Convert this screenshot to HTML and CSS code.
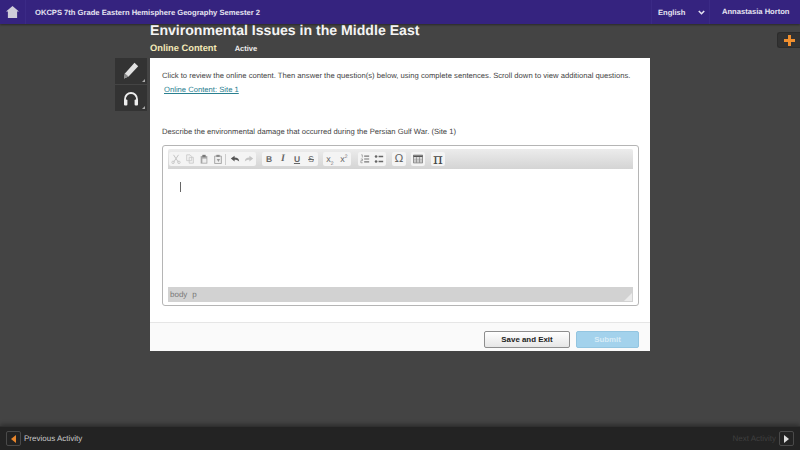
FILE: index.html
```html
<!doctype html>
<html>
<head>
  <title>Environmental Issues in the Middle East</title>
  <link rel="stylesheet" href="styles.css">
</head>
<body>
  <header class="topbar">
    <a class="home">
      <svg width="13" height="12" viewBox="0 0 14 13"><path d="M7 0L14 6H12V13H2V6H0Z" fill="#cfcdda"/></svg>
    </a>
    <div class="course">OKCPS 7th Grade Eastern Hemisphere Geography Semester 2</div>
    <div class="lang">
      <span>English</span>
      <svg width="7" height="5" viewBox="0 0 7 5"><path d="M.8 1L3.5 3.7L6.2 1" fill="none" stroke="#e4e2f0" stroke-width="1.6"/></svg>
    </div>
    <div class="user">Annastasia Horton</div>
  </header>

  <main class="stage">
    <button class="plus">
      <svg width="11" height="11" viewBox="0 0 11 11"><path d="M4 0H7V4H11V7H7V11H4V7H0V4H4Z" fill="#f08f2e"/></svg>
    </button>
    <div class="column">
      <h1>Environmental Issues in the Middle East</h1>
      <div class="subtitle">
        <span class="kind">Online Content</span>
        <span class="status">Active</span>
      </div>
      <div class="workspace">
        <div class="tools">
          <div class="tool">
            <svg width="16" height="18" viewBox="0 0 16 18"><path d="M11.5 .8L15.2 4.2L5.6 14.6L1 16.6L1.9 11.6Z" fill="#e2e2e2"/><path d="M1.9 11.6L5.6 14.6L1 16.6Z" fill="#8a8a8a"/></svg>
          </div>
          <div class="tool">
            <svg width="16" height="15" viewBox="0 0 16 15"><path d="M2 11V8A6 6 0 0 1 14 8V11" fill="none" stroke="#eee" stroke-width="1.8"/><rect x="1" y="8.5" width="3.4" height="6" rx="1" fill="#eee"/><rect x="11.6" y="8.5" width="3.4" height="6" rx="1" fill="#eee"/></svg>
          </div>
        </div>
        <section class="card">
          <div class="card-body">
            <p class="intro">Click to review the online content. Then answer the question(s) below, using complete sentences. Scroll down to view additional questions.</p>
            <a class="site-link">Online Content: Site 1</a>
            <p class="question">Describe the environmental damage that occurred during the Persian Gulf War. (Site 1)</p>
            <div class="editor">
              <div class="toolbar">
                <div class="group">
                  <svg class="ico" viewBox="0 0 12 12"><path d="M3 1L9 10M9 1L3 10" stroke="#c4c4c4" stroke-width="1.2" fill="none"/><circle cx="2.5" cy="10" r="1.5" fill="none" stroke="#c4c4c4"/><circle cx="9.5" cy="10" r="1.5" fill="none" stroke="#c4c4c4"/></svg>
                  <svg class="ico" viewBox="0 0 12 12"><path d="M2 1H6L8 3V8H2ZM5 4H10V11H5Z" fill="#f2f2f2" stroke="#c8c8c8"/></svg>
                  <svg class="ico" viewBox="0 0 12 12"><path d="M2 2.5H10V11.5H2Z" fill="#a6a6a6"/><path d="M4 1H8V3.5H4Z" fill="#777"/><path d="M4 5.5H9V10.5H4Z" fill="#eee"/></svg>
                  <svg class="ico" viewBox="0 0 12 12"><path d="M2 2.5H10V11.5H2Z" fill="#eee" stroke="#999"/><path d="M4 1H8V3.5H4Z" fill="#888"/><path d="M4.5 6H8.5L6.5 9.5Z" fill="#999"/></svg>
                  <span class="sep"></span>
                  <svg class="ico" viewBox="0 0 12 12"><path d="M1 5.5L5.5 2V4.2C9 4.2 11 6 11 9C9.8 7.4 8 6.8 5.5 6.8V9Z" fill="#555"/></svg>
                  <svg class="ico" viewBox="0 0 12 12"><path d="M11 5.5L6.5 2V4.2C3 4.2 1 6 1 9C2.2 7.4 4 6.8 6.5 6.8V9Z" fill="#c4c4c4"/></svg>
                </div>
                <div class="group">
                  <span class="glyph bold">B</span>
                  <span class="glyph ital">I</span>
                  <span class="glyph under">U</span>
                  <span class="glyph strike">S</span>
                </div>
                <div class="group pull">
                  <span class="glyph script">x<sub>2</sub></span>
                  <span class="glyph script">x<sup>2</sup></span>
                </div>
                <div class="group push">
                  <svg class="ico" viewBox="0 0 12 12"><path d="M5 2.5H11M5 6H11M5 9.5H11" stroke="#777" stroke-width="1.4"/><path d="M1.5 1H2.8V4.2M1 6H3V8H1V10.5H3.2" fill="none" stroke="#888" stroke-width=".8"/></svg>
                  <svg class="ico" viewBox="0 0 12 12"><path d="M5.5 3H11M5.5 9H11" stroke="#666" stroke-width="2"/><circle cx="2.5" cy="3" r="1.6" fill="#666"/><circle cx="2.5" cy="9" r="1.6" fill="#666"/></svg>
                </div>
                <div class="group">
                  <span class="glyph omega">Ω</span>
                </div>
                <div class="group pull">
                  <svg class="ico" viewBox="0 0 13 12"><path d="M.5 1H12.5V11H.5Z" fill="#f4f4f4" stroke="#666"/><path d="M.5 1.5H12.5V3.6H.5Z" fill="#555"/><path d="M.5 6.2H12.5M.5 8.6H12.5M4.5 3.6V11M8.5 3.6V11" stroke="#888"/></svg>
                </div>
                <div class="group">
                  <span class="glyph pi">π</span>
                </div>
              </div>
              <div class="edit-area"><span class="caret"></span></div>
              <div class="statusbar">
                <span>body</span><span>p</span>
                <svg class="grip" width="8" height="8" viewBox="0 0 8 8"><path d="M8 0V8H0Z" fill="#ebebeb"/></svg>
              </div>
            </div>
          </div>
          <div class="actions">
            <button class="btn save">Save and Exit</button>
            <button class="btn submit">Submit</button>
          </div>
        </section>
      </div>
    </div>
  </main>

  <footer class="bottombar">
    <div class="nav">
      <span class="arrow"><svg width="5" height="8" viewBox="0 0 5 8"><path d="M5 0V8L0 4Z" fill="#e8862c"/></svg></span>
      <span>Previous Activity</span>
    </div>
    <div class="nav next">
      <span>Next Activity</span>
      <span class="arrow"><svg width="5" height="8" viewBox="0 0 5 8"><path d="M0 0V8L5 4Z" fill="#ddd"/></svg></span>
    </div>
  </footer>
</body>
</html>
```

FILE: styles.css
```css
* { box-sizing: border-box; }

body {
  margin: 0;
  width: 800px;
  height: 450px;
  overflow: hidden;
  display: flex;
  flex-direction: column;
  background: #444;
  font-family: "Liberation Sans", Arial, sans-serif;
  text-rendering: geometricPrecision;
}

/* top bar */
.topbar {
  height: 24px;
  flex: none;
  display: flex;
  align-items: center;
  background: #35237f;
  color: #e6e4f1;
  font-size: 7.6px;
  font-weight: bold;
  box-shadow: 0 1px 2px rgba(0, 0, 0, .4);
  position: relative;
}
.home {
  width: 26px;
  height: 24px;
  display: flex;
  align-items: center;
  justify-content: center;
  border-right: 1px solid #3b2a86;
}
.course {
  flex: 1;
  padding-left: 9px;
}
.lang {
  width: 58px;
  height: 24px;
  padding: 0 4px 0 6px;
  display: flex;
  align-items: center;
  justify-content: space-between;
  border-left: 1px solid #3b2a86;
}
.user {
  width: 91px;
  height: 24px;
  line-height: 24px;
  padding-left: 12px;
  border-left: 1px solid #3b2a86;
  white-space: nowrap;
}

/* main area */
.stage {
  flex: 1;
  padding-left: 115px;
  position: relative;
}
.plus {
  position: absolute;
  top: 8px;
  right: 0;
  width: 23px;
  height: 16px;
  padding: 0;
  display: flex;
  align-items: center;
  justify-content: center;
  background: #333;
  border: 1px solid #2c2c2c;
  border-right: 0;
  border-radius: 3px 0 0 3px;
}
.column { width: 535px; }
h1 {
  margin: 0 0 0 35px;
  height: 16px;
  line-height: 12px;
  color: #f4f4f4;
  font-size: 14.1px;
  font-weight: bold;
  white-space: nowrap;
}
.subtitle {
  margin-left: 35px;
  height: 18px;
  padding-bottom: 2px;
  display: flex;
  align-items: center;
  gap: 18px;
}
.kind {
  color: #f3e9b8;
  font-size: 9.3px;
  font-weight: bold;
}
.status {
  color: #eee;
  font-size: 7.5px;
  font-weight: bold;
}
.workspace {
  display: flex;
  gap: 3px;
}
.tools {
  width: 32px;
  flex: none;
}
.tool {
  height: 26px;
  display: flex;
  align-items: center;
  justify-content: center;
  background: #333;
  position: relative;
  margin-bottom: 1px;
}
.tool:after {
  content: "";
  position: absolute;
  right: 2px;
  bottom: 2px;
  border-style: solid;
  border-width: 0 0 3px 3px;
  border-color: transparent transparent #aaa transparent;
}

/* card */
.card {
  width: 500px;
  height: 293px;
  background: #fff;
  color: #444;
  font-size: 7.65px;
}
.card-body {
  height: 265px;
  padding: 12px 12px 0 12px;
  border-bottom: 1px solid #e6e6e6;
}
.intro {
  margin: 0;
  line-height: 11px;
  white-space: nowrap;
}
.site-link {
  display: inline-block;
  margin: 3px 0 0 2px;
  line-height: 11px;
  color: #2a8090;
  text-decoration: underline;
}
.question {
  margin: 31px 0 8px;
  line-height: 11px;
}

/* editor */
.editor {
  width: 477px;
  height: 161px;
  padding: 3px 5px;
  border: 1px solid #b5b5b5;
  border-radius: 3px;
  display: flex;
  flex-direction: column;
}
.toolbar {
  height: 20px;
  flex: none;
  display: flex;
  align-items: center;
  gap: 6px;
  padding: 0 1px;
  background: linear-gradient(#ececec, #d4d4d4);
  border-radius: 2px 2px 0 0;
}
.group {
  height: 14px;
  display: flex;
  align-items: center;
  background: #f4f4f4;
  border-radius: 2px;
}
.pull { margin-left: -1px; }
.push { margin-left: 1px; }
.ico {
  width: 14px;
  height: 10px;
  padding: 0 2px;
  flex: none;
}
.sep {
  width: 1px;
  height: 11px;
  margin-right: 2px;
  background: #ccc;
}
.glyph {
  width: 14px;
  text-align: center;
  color: #666;
  font-size: 8.5px;
  line-height: 12px;
}
.bold { font-weight: bold; }
.ital { font-style: italic; font-family: "Liberation Serif", serif; font-size: 10px; font-weight: bold; }
.under { text-decoration: underline; font-weight: bold; }
.strike { text-decoration: line-through; }
.script { font-size: 9px; }
.script sub, .script sup { font-size: 5px; line-height: 0; }
.omega { font-size: 11px; font-family: "DejaVu Sans", sans-serif; }
.pi { font-size: 15px; font-family: "DejaVu Serif", serif; color: #444; }
.edit-area {
  flex: 1;
  padding: 13px 12px;
  background: #fff;
}
.caret {
  display: block;
  width: 1px;
  height: 10px;
  background: #666;
}
.statusbar {
  height: 15px;
  flex: none;
  display: flex;
  align-items: center;
  gap: 5px;
  padding: 0 2px;
  background: #d2d2d2;
  color: #777;
  font-size: 8px;
  position: relative;
}
.grip {
  position: absolute;
  right: 1px;
  bottom: 1px;
}
.actions {
  height: 28px;
  display: flex;
  justify-content: flex-end;
  align-items: flex-start;
  gap: 6px;
  padding: 8px 11px 0 0;
  background: #fafafa;
}
.btn {
  height: 17px;
  padding: 0;
  font-family: inherit;
  font-size: 7.9px;
  font-weight: bold;
  border-radius: 2px;
}
.save {
  width: 86px;
  color: #222;
  background: linear-gradient(#fff, #e6e6e6);
  border: 1px solid #8e8e8e;
}
.submit {
  width: 63px;
  color: #d8ecf7;
  background: #a3d2ec;
  border: 1px solid #93c5e0;
}

/* bottom bar */
.bottombar {
  height: 24px;
  flex: none;
  display: flex;
  align-items: center;
  justify-content: space-between;
  padding: 0 6px;
  background: #232323;
  border-top: 1px solid #2f2f2f;
  color: #c9c9c9;
  font-size: 8px;
  box-shadow: 0 -2px 4px rgba(0, 0, 0, .3);
}
.nav {
  display: flex;
  align-items: center;
  gap: 3px;
}
.next { color: #3f3f3f; }
.arrow {
  width: 15px;
  height: 15px;
  display: flex;
  align-items: center;
  justify-content: center;
  border: 1px solid #4a4a4a;
  border-radius: 2px;
}
```
